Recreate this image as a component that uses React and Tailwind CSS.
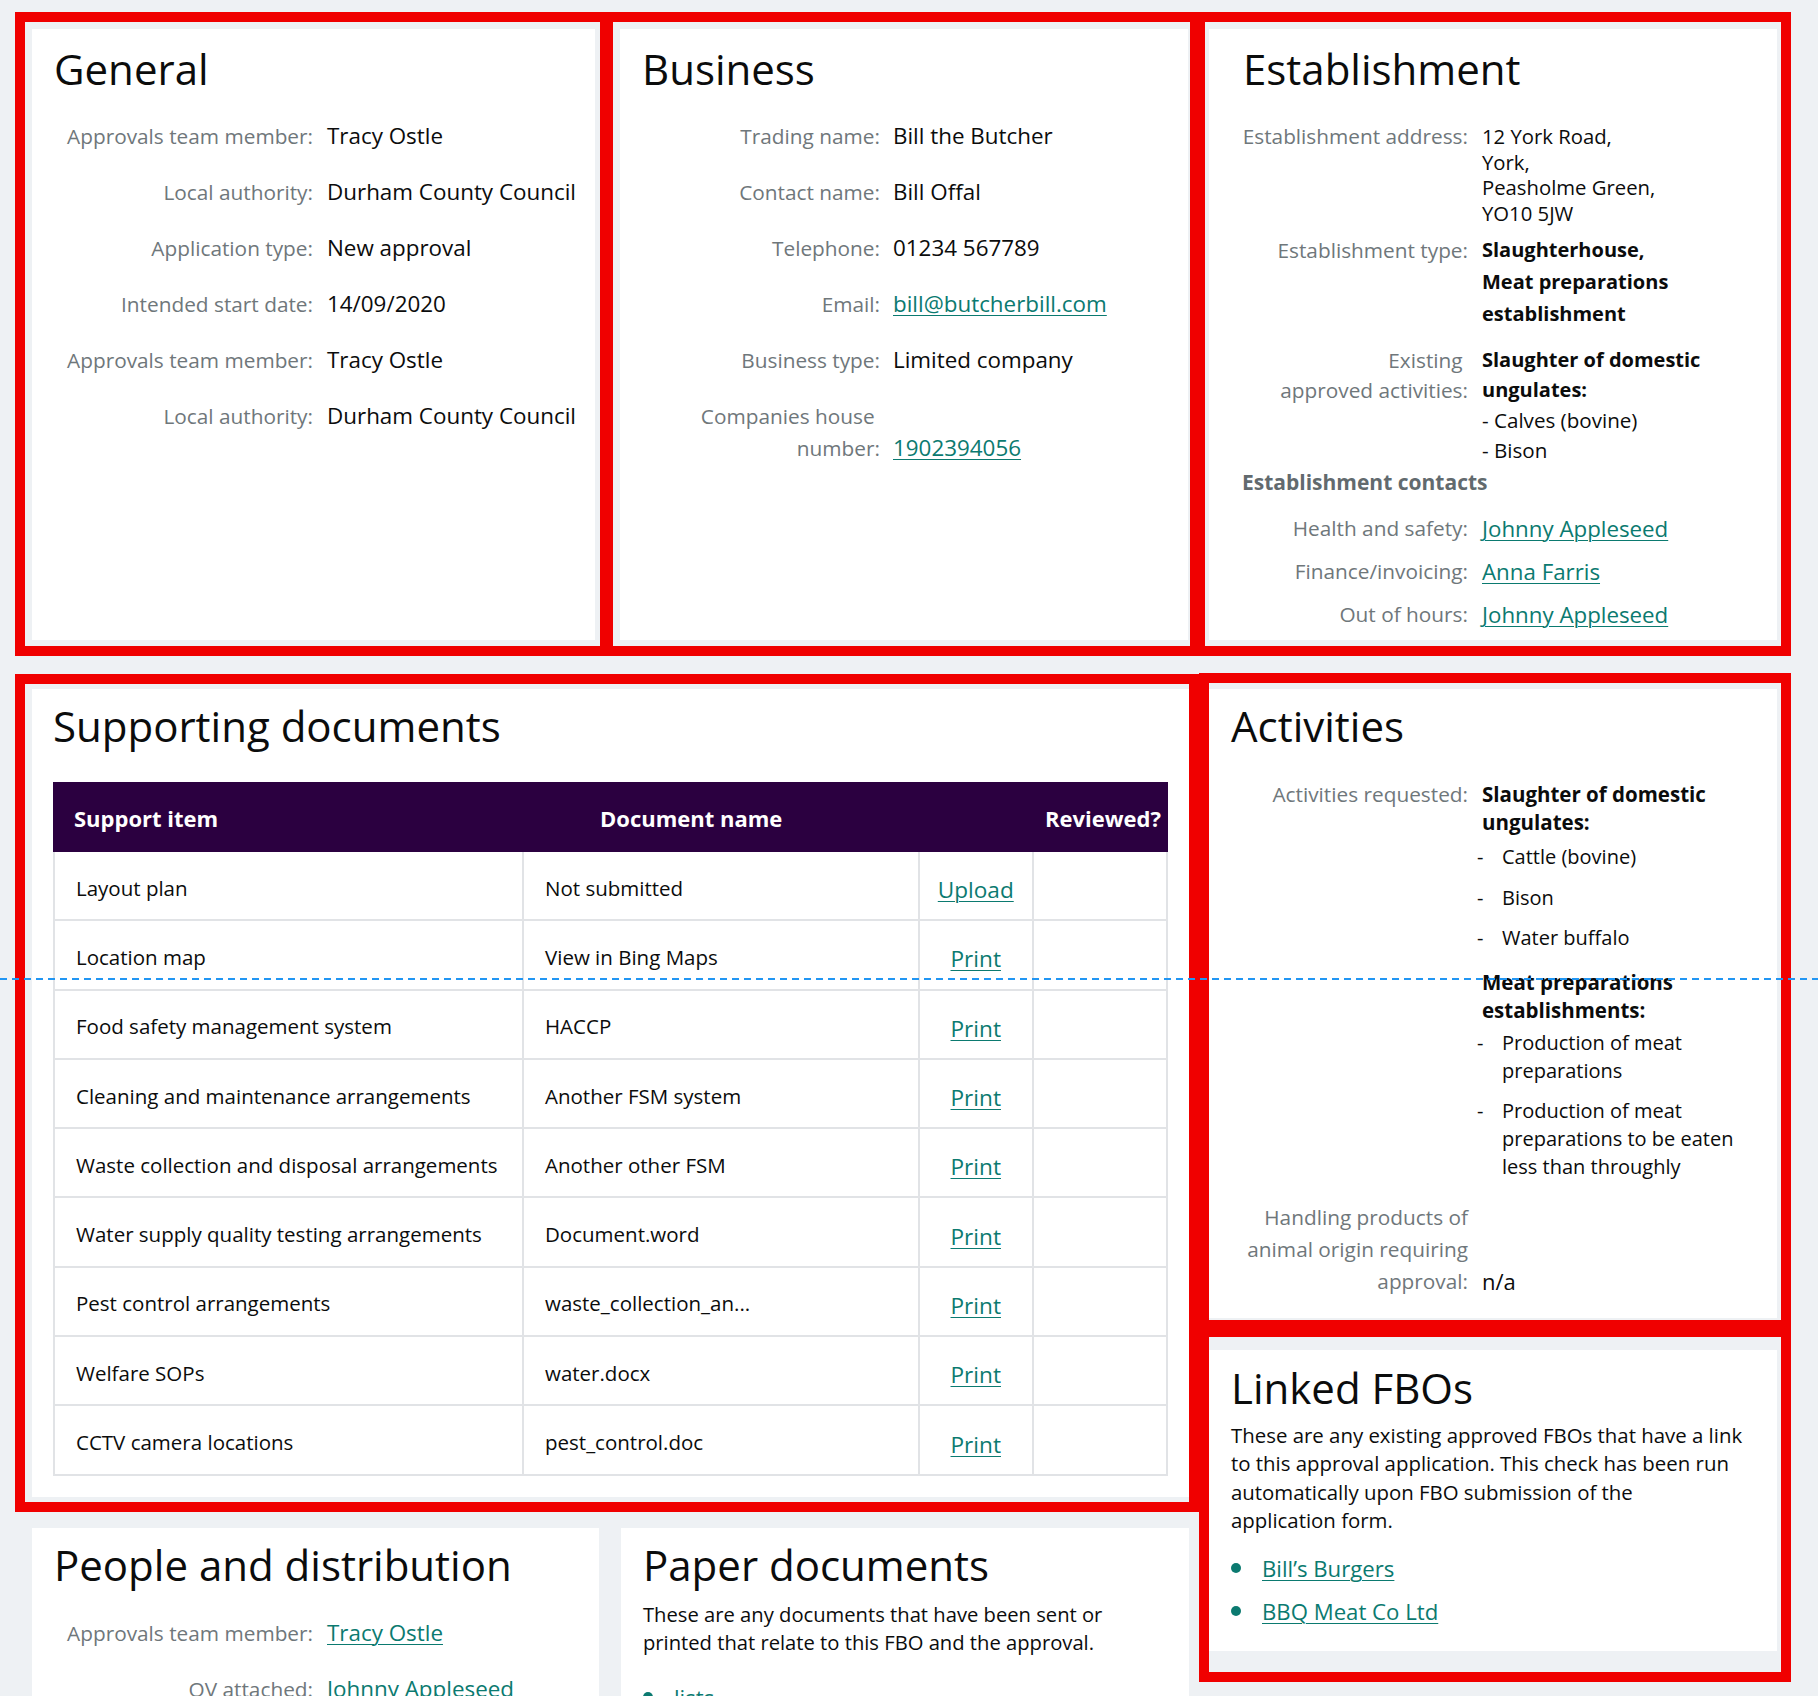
const LINK = "text-[#0b7a70] underline underline-offset-[3px] decoration-[1px]";

function Row({ label, children, lw, gap = "pl-[14px]", align = "items-end" }) {
  return (
    <div className={`flex ${align} py-[12px]`}>
      <div className={`${lw} shrink-0 text-right text-[20.8px] leading-[32px] text-[#6f777b]`}>{label}</div>
      <div className={`${gap} shrink-0 whitespace-nowrap text-[22.4px] leading-[32px] text-[#0b0c0c]`}>{children}</div>
    </div>
  );
}

function H2({ children }) {
  return <h2 className="text-[42px] leading-[50px] font-normal text-[#0b0c0c]">{children}</h2>;
}

function General() {
  return (
    <div className="relative h-[611px] w-[563px] shrink-0 bg-white px-[22px] pt-[15px]">
      <div className="pointer-events-none absolute -top-[17px] -bottom-[16px] -left-[17px] -right-[15px] z-10 border-[10px] border-[#f00000]" />
      <H2>General</H2>
      <div className="mt-[14px]">
        <Row lw="w-[259px]" label="Approvals team member:">Tracy Ostle</Row>
        <Row lw="w-[259px]" label="Local authority:">Durham County Council</Row>
        <Row lw="w-[259px]" label="Application type:">New approval</Row>
        <Row lw="w-[259px]" label="Intended start date:">14/09/2020</Row>
        <Row lw="w-[259px]" label="Approvals team member:">Tracy Ostle</Row>
        <Row lw="w-[259px]" label="Local authority:">Durham County Council</Row>
      </div>
    </div>
  );
}

function Business() {
  return (
    <div className="relative ml-[25px] h-[611px] w-[568px] shrink-0 bg-white px-[22px] pt-[15px]">
      <div className="pointer-events-none absolute -top-[17px] -bottom-[16px] -left-[17px] -right-[17px] z-10 border-[10px] border-[#f00000]" />
      <H2>Business</H2>
      <div className="mt-[14px]">
        <Row lw="w-[238px]" gap="pl-[13px]" label="Trading name:">Bill the Butcher</Row>
        <Row lw="w-[238px]" gap="pl-[13px]" label="Contact name:">Bill Offal</Row>
        <Row lw="w-[238px]" gap="pl-[13px]" label="Telephone:">01234 567789</Row>
        <Row lw="w-[238px]" gap="pl-[13px]" label="Email:">
          <a className={LINK}>bill@butcherbill.com</a>
        </Row>
        <Row lw="w-[238px]" gap="pl-[13px]" label="Business type:">Limited company</Row>
        <Row
          lw="w-[238px]"
          gap="pl-[13px]"
          label={
            <>
              Companies house{"\u00a0"}
              <br />
              number:
            </>
          }
        >
          <a className={LINK}>1902394056</a>
        </Row>
      </div>
    </div>
  );
}

function Establishment() {
  const lab = "w-[228px] shrink-0 whitespace-nowrap text-right text-[20.8px] text-[#6f777b]";
  return (
    <div className="relative ml-[21px] h-[611px] w-[568px] shrink-0 bg-white px-[31px] pt-[15px]">
      <div className="pointer-events-none absolute -top-[17px] -bottom-[16px] -left-[19px] -right-[14px] z-10 border-[10px] border-[#f00000]" />
      <div className="ml-[3px]">
        <H2>Establishment</H2>
      </div>
      <div className="mt-[30px] flex items-start">
        <div className={`${lab} leading-[25.5px]`}>Establishment address:</div>
        <div className="pl-[14px] text-[20.3px] leading-[25.5px]">
          12 York Road,
          <br />
          York,
          <br />
          Peasholme Green,
          <br />
          YO10 5JW
        </div>
      </div>
      <div className="mt-[8px] flex items-start">
        <div className={`${lab} leading-[32px]`}>Establishment type:</div>
        <div className="pl-[14px] text-[20px] font-bold leading-[32px]">
          Slaughterhouse,
          <br />
          Meat preparations
          <br />
          establishment
        </div>
      </div>
      <div className="mt-[15px] flex items-start">
        <div className={`${lab} leading-[30px]`}>
          Existing{"\u00a0"}
          <br />
          approved activities:
        </div>
        <div className="pl-[14px] text-[20px] leading-[30px]">
          <div className="font-bold">
            Slaughter of domestic
            <br />
            ungulates:
          </div>
          <div className="text-[20.6px]">- Calves (bovine)</div>
          <div className="text-[20.6px]">- Bison</div>
        </div>
      </div>
      <div className="ml-[2px] mt-[2px] text-[21px] font-bold leading-[30px] text-[#626a6e]">Establishment contacts</div>
      <div className="mt-[10px]">
        {[
          ["Health and safety:", "Johnny Appleseed"],
          ["Finance/invoicing:", "Anna Farris"],
          ["Out of hours:", "Johnny Appleseed"],
        ].map(([l, v], i) => (
          <div key={i} className="flex items-start">
            <div className={`${lab} leading-[43px]`}>{l}</div>
            <div className="pl-[14px] text-[22.3px] leading-[43px]">
              <a className={LINK}>{v}</a>
            </div>
          </div>
        ))}
      </div>
    </div>
  );
}

const DOCS = [
  ["Layout plan", "Not submitted", "Upload"],
  ["Location map", "View in Bing Maps", "Print"],
  ["Food safety management system", "HACCP", "Print"],
  ["Cleaning and maintenance arrangements", "Another FSM system", "Print"],
  ["Waste collection and disposal arrangements", "Another other FSM", "Print"],
  ["Water supply quality testing arrangements", "Document.word", "Print"],
  ["Pest control arrangements", "waste_collection_an...", "Print"],
  ["Welfare SOPs", "water.docx", "Print"],
  ["CCTV camera locations", "pest_control.doc", "Print"],
];

function Supporting() {
  return (
    <div className="relative h-[808px] w-[1157px] bg-white pl-[21px] pt-[12px]">
      <div className="pointer-events-none absolute -top-[15px] -bottom-[15px] -left-[17px] -right-[10px] z-10 border-[10px] border-[#f00000]" />
      <H2>Supporting documents</H2>
      <div className="mt-[31px] w-[1115px]">
        <div className="flex h-[70px] items-center bg-[#2b0040] pt-[2px] text-[22px] font-bold leading-[28px] text-white">
          <div className="w-[525px] pl-[21px]">Support item</div>
          <div className="w-[445px] pl-[22px]">Document name</div>
          <div className="pl-[22px]">Reviewed?</div>
        </div>
        <div className="border-x-2 border-[#e1e3e6]">
          {DOCS.map(([a, b, c], i) => (
            <div key={i} className="flex h-[69.3px] border-b-2 border-[#e1e3e6]">
              <div className="flex w-[469px] items-center border-r-2 border-[#e1e3e6] pl-[21px] pt-[4px] text-[20.5px] leading-[28px]">
                {a}
              </div>
              <div className="flex w-[395.5px] items-center border-r-2 border-[#e1e3e6] pl-[21px] pt-[4px] text-[20.5px] leading-[28px]">
                {b}
              </div>
              <div className="flex w-[114.5px] items-center justify-center border-r-2 border-[#e1e3e6] pt-[9px] text-[22.6px] leading-[28px]">
                <a className={LINK}>{c}</a>
              </div>
              <div className="flex-1" />
            </div>
          ))}
        </div>
      </div>
    </div>
  );
}

function Dash({ children, first }) {
  return (
    <div className={`flex text-[20px] leading-[28px] ${first ? "" : "mt-[12.4px]"}`}>
      <span className="-ml-[5px] w-[25px] shrink-0">-</span>
      <span>{children}</span>
    </div>
  );
}

function Activities() {
  const lab = "w-[237px] shrink-0 text-right text-[20.8px] text-[#6f777b]";
  return (
    <div className="relative h-[629px] w-[568px] bg-white px-[22px] pt-[12px]">
      <div className="pointer-events-none absolute -top-[16px] -bottom-[12px] -left-[10px] -right-[14px] z-10 border-[10px] border-[#f00000]" />
      <H2>Activities</H2>
      <div className="mt-[28.6px] flex items-start">
        <div className={`${lab} leading-[28.5px]`}>Activities requested:</div>
        <div className="pl-[14px]">
          <div className="text-[20.5px] font-bold leading-[28.5px]">
            Slaughter of domestic
            <br />
            ungulates:
          </div>
          <div className="mt-[6.6px]">
            <Dash first>Cattle (bovine)</Dash>
            <Dash>Bison</Dash>
            <Dash>Water buffalo</Dash>
          </div>
          <div className="mt-[15.8px] text-[20.5px] font-bold leading-[28.5px]">
            Meat preparations
            <br />
            establishments:
          </div>
          <div className="mt-[4px]">
            <Dash first>
              Production of meat
              <br />
              preparations
            </Dash>
            <div className="mt-[0.8px]" />
            <Dash>
              Production of meat
              <br />
              preparations to be eaten
              <br />
              less than throughly
            </Dash>
          </div>
        </div>
      </div>
      <div className="mt-[20px] flex items-end">
        <div className={`${lab} leading-[32px]`}>
          Handling products of
          <br />
          animal origin requiring
          <br />
          approval:
        </div>
        <div className="pl-[14px] text-[22px] leading-[32px]">n/a</div>
      </div>
    </div>
  );
}

function Bullet({ children }) {
  return (
    <div className="flex items-center text-[22.2px] leading-[43px]">
      <span className="mr-[21px] mt-[-2px] h-[10px] w-[10px] shrink-0 rounded-full bg-[#0b7a70]" />
      <a className={LINK}>{children}</a>
    </div>
  );
}

function Linked() {
  return (
    <div className="relative mt-[32px] h-[301px] w-[568px] bg-white px-[22px] pt-[12.5px]">
      <div className="pointer-events-none absolute -top-[23px] -bottom-[31px] -left-[10px] -right-[14px] z-10 border-[10px] border-[#f00000]" />
      <H2>Linked FBOs</H2>
      <p className="mt-[8.5px] whitespace-nowrap text-[20.4px] leading-[28.4px]">
        These are any existing approved FBOs that have a link
        <br />
        to this approval application. This check has been run
        <br />
        automatically upon FBO submission of the
        <br />
        application form.
      </p>
      <div className="mt-[12.4px]">
        <Bullet>Bill’s Burgers</Bullet>
        <Bullet>BBQ Meat Co Ltd</Bullet>
      </div>
    </div>
  );
}

function People() {
  return (
    <div className="h-[400px] w-[567px] shrink-0 bg-white px-[22px] pt-[12px]">
      <H2>People and distribution</H2>
      <div className="mt-[15px]">
        <Row lw="w-[259px]" label="Approvals team member:">
          <a className={LINK}>Tracy Ostle</a>
        </Row>
        <Row lw="w-[259px]" label="OV attached:">
          <a className={LINK}>Johnny Appleseed</a>
        </Row>
      </div>
    </div>
  );
}

function Paper() {
  return (
    <div className="ml-[22px] h-[400px] w-[568px] shrink-0 bg-white px-[22px] pt-[12px]">
      <H2>Paper documents</H2>
      <p className="mt-[9.7px] whitespace-nowrap text-[20.2px] leading-[28.3px]">
        These are any documents that have been sent or
        <br />
        printed that relate to this FBO and the approval.
      </p>
      <div className="mt-[20px]">
        <Bullet>lists</Bullet>
      </div>
    </div>
  );
}

export default function App() {
  return (
    <div className="relative h-[1696px] w-[1818px] overflow-hidden bg-[#eef1f4] pl-[32px] pt-[29px] font-['Open_Sans','Noto_Sans',sans-serif] text-[#0b0c0c]">
      <div className="flex">
        <General />
        <Business />
        <Establishment />
      </div>
      <div className="mt-[49px] flex">
        <div className="flex w-[1157px] shrink-0 flex-col">
          <Supporting />
          <div className="mt-[31px] flex">
            <People />
            <Paper />
          </div>
        </div>
        <div className="ml-[20px] flex w-[568px] shrink-0 flex-col">
          <Activities />
          <Linked />
        </div>
      </div>
      <svg className="pointer-events-none absolute left-0 top-[978px] z-20" width="1818" height="2">
        <line x1="0" y1="1" x2="1818" y2="1" stroke="#2196f3" strokeWidth="2" strokeDasharray="7 5" />
      </svg>
    </div>
  );
}
